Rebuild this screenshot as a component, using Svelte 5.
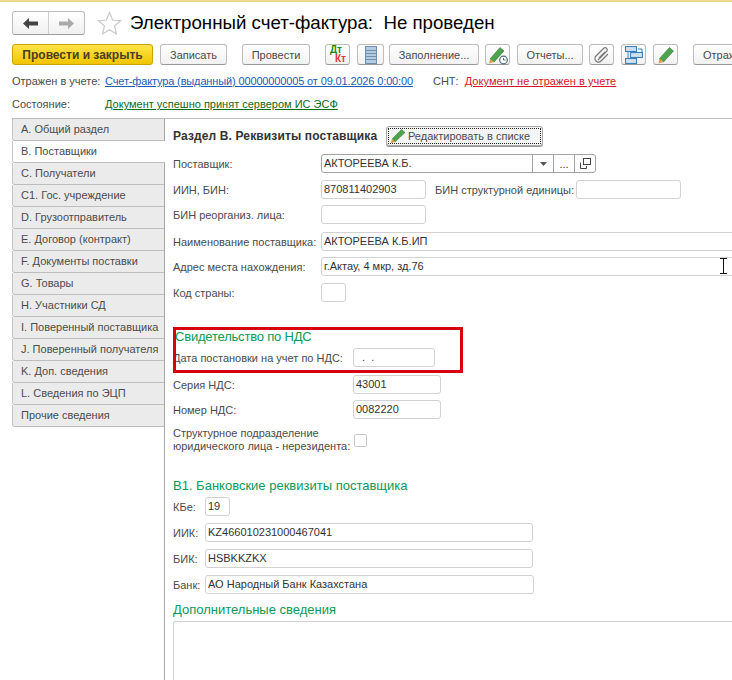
<script>
  const tabs = ['A. Общий раздел','B. Поставщики','C. Получатели','С1. Гос. учреждение','D. Грузоотправитель','E. Договор (контракт)','F. Документы поставки','G. Товары','H. Участники СД','I. Поверенный поставщика','J. Поверенный получателя','K. Доп. сведения','L. Сведения по ЭЦП','Прочие сведения'];
</script>

<div class="page">
  <header class="head">
    <div class="nav">
      <button class="navbtn"><svg width="15" height="11" viewBox="0 0 15 11"><path d="M0 5.5 6 0v3.5h9v4H6V11z" fill="#444"/></svg></button>
      <button class="navbtn"><svg width="15" height="11" viewBox="0 0 15 11"><path d="M15 5.5 9 0v3.5H0v4h9V11z" fill="#aaa"/></svg></button>
    </div>
    <svg class="star" width="25" height="24" viewBox="0 0 25 24"><path d="M12.5 1.5 15.6 9l8 .7-6.1 5.3 1.9 7.9-6.9-4.2-6.9 4.2 1.9-7.9L1.4 9.700l8-.7z" fill="#fff" stroke="#c8c8c8" stroke-width="1.200"/></svg>
    <h1>Электронный счет-фактура:&nbsp; Не проведен</h1>
  </header>

  <div class="toolbar">
    <button class="btn primary w141">Провести и закрыть</button>
    <button class="btn w67 ml7">Записать</button>
    <button class="btn w68 ml15">Провести</button>
    <button class="btn icon ml15 dtkt"><span class="dt">Дт</span><span class="kt">Кт</span></button>
    <button class="btn iconw ml7"><svg width="12" height="18" viewBox="0 0 12 18"><rect x=".5" y=".5" width="11" height="17" fill="#b5cbe0" stroke="#6f8fae"/><path d="M1 4.500h10M1 7.500h10M1 10.500h10M1 13.500h10" stroke="#6f8fae"/></svg></button>
    <button class="btn w90 ml5">Заполнение...</button>
    <button class="btn icon ml6"><svg width="20" height="20" viewBox="0 0 20 20"><path d="M2 14 12 2.500l4 3.500L6 17z" fill="#4ea24e" stroke="#3a7a3a" stroke-width=".6"/><path d="M2 14l-1 4.500L6 17z" fill="#e0a04a"/><circle cx="15.500" cy="15" r="3.800" fill="#fff" stroke="#4a6a80" stroke-width="1.200"/><path d="M15.500 13v2h2" stroke="#4a6a80" fill="none"/></svg></button>
    <button class="btn w66 ml7">Отчеты...</button>
    <button class="btn icon ml6"><svg width="18" height="18" viewBox="0 0 18 18"><path d="M5 14 14 5a2.200 2.200 0 0 0-3-3L3 10a3.500 3.500 0 0 0 5 5l7-7M6 12l6-6" fill="none" stroke="#777" stroke-width="1.200"/></svg></button>
    <button class="btn icon ml7"><svg width="18" height="18" viewBox="0 0 18 18"><g fill="#cfe0f0" stroke="#3f7fb5" stroke-width="1.100"><rect x=".5" y=".5" width="11" height="5"/><rect x="5.500" y="6.500" width="12" height="5"/><rect x=".5" y="12.500" width="11" height="5"/></g><path d="M13 3h4v3M3 6v6" fill="none" stroke="#3f7fb5"/></svg></button>
    <button class="btn icon ml7"><svg width="18" height="18" viewBox="0 0 18 18"><path d="M2.500 12.500 12.500 1.500l4 3.500L6.500 16z" fill="#4ea24e" stroke="#3a7a3a" stroke-width=".6"/><path d="M2.500 12.500 1.500 17.500l5-1.500z" fill="#e0a04a"/></svg></button>
    <button class="btn clip ml15">Отражение</button>
  </div>

  <div class="info first">
    <span class="k">Отражен в учете:</span>
    <a class="blue" href="#a">Счет-фактура (выданный) 00000000005 от 09.01.2026 0:00:00</a>
    <span class="snt">СНТ:</span>
    <a class="red" href="#b">Документ не отражен в учете</a>
  </div>
  <div class="info second">
    <span class="k">Состояние:</span>
    <a class="green" href="#c">Документ успешно принят сервером ИС ЭСФ</a>
  </div>

  <main class="main">
    <nav class="tabs">
      {#each tabs as t, i}
        <div class="tab" class:active={i === 1}>{t}</div>
      {/each}
    </nav>

    <section class="form">
      <div class="section-head">
        <strong>Раздел В. Реквизиты поставщика</strong>
        <button class="edit"><svg width="16" height="16" viewBox="0 0 16 16"><path d="M2 11 11.500 1.500l3.500 3L5 14z" fill="#4ea24e" stroke="#3a7a3a" stroke-width=".5"/><path d="M2 11 .8 15.200 5 14z" fill="#e0a04a"/></svg>Редактировать в списке</button>
      </div>

      <div class="row r1">
        <label class="l148">Поставщик:</label>
        <div class="combo">
          <span class="cval">АКТОРЕЕВА К.Б.</span>
          <span class="cb"><svg width="7" height="4" viewBox="0 0 7 4"><path d="M0 0h7L3.500 4z" fill="#555"/></svg></span>
          <span class="cb dots">...</span>
          <span class="cb"><svg width="11" height="11" viewBox="0 0 11 11" fill="none" stroke="#444"><rect x="3.500" y=".5" width="7" height="6"/><path d="M.5 4.500v6h6V8"/></svg></span>
        </div>
      </div>
      <div class="row r2">
        <label class="l148">ИИН, БИН:</label>
        <div class="inp w105">870811402903</div>
        <label class="mid">БИН структурной единицы:</label>
        <div class="inp w105"></div>
      </div>
      <div class="row r3">
        <label class="l148">БИН реорганиз. лица:</label>
        <div class="inp w105"></div>
      </div>
      <div class="row r4">
        <label class="l148">Наименование поставщика:</label>
        <div class="inp open">АКТОРЕЕВА К.Б.ИП</div>
      </div>
      <div class="row r5">
        <label class="l148">Адрес места нахождения:</label>
        <div class="inp open">г.Актау, 4 мкр, зд.76</div>
      </div>
      <div class="row r6">
        <label class="l148">Код страны:</label>
        <div class="inp w25"></div>
      </div>

      <h2 class="green-h vat">Свидетельство по НДС</h2>
      <div class="row r7">
        <label class="l180">Дата постановки на учет по НДС:</label>
        <div class="inp w82 date">&nbsp;.&nbsp;&nbsp;.</div>
      </div>
      <div class="row r8">
        <label class="l180">Серия НДС:</label>
        <div class="inp w88">43001</div>
      </div>
      <div class="row r9">
        <label class="l180">Номер НДС:</label>
        <div class="inp w88">0082220</div>
      </div>
      <div class="row r10">
        <label class="l181 two">Структурное подразделение<br />юридического лица - нерезидента:</label>
        <span class="check"></span>
      </div>

      <h2 class="green-h bank">В1. Банковские реквизиты поставщика</h2>
      <div class="row r11">
        <label class="l32">КБе:</label>
        <div class="inp w25">19</div>
      </div>
      <div class="row r12">
        <label class="l32">ИИК:</label>
        <div class="inp w328">KZ466010231000467041</div>
      </div>
      <div class="row r12">
        <label class="l32">БИК:</label>
        <div class="inp w328">HSBKKZKX</div>
      </div>
      <div class="row r12">
        <label class="l32">Банк:</label>
        <div class="inp w329">АО Народный Банк Казахстана</div>
      </div>
      <h2 class="green-h extra">Дополнительные сведения</h2>
      <div class="area"></div>
    </section>
  </main>

  <div class="redbox"></div>
  <svg class="cursor" width="9" height="16" viewBox="0 0 9 16"><path d="M1 .5h7M1 15.500h7M4.500 .5v15" stroke="#111" fill="none"/></svg>
</div>

<style>
  :global(body) { margin: 0; background: #fff; }
  .page {
    position: relative;
    width: 732px;
    height: 680px;
    overflow: hidden;
    background: #fff;
    border-top: 2px solid #ecd98f;
    box-sizing: border-box;
    font: 11px/14px "Liberation Sans", Arial, sans-serif;
    color: #4b4b4b;
  }
  .head { display: flex; align-items: center; height: 26px; padding: 8px 0 0 12px; }
  .nav {
    display: flex; width: 73px; height: 24px; box-sizing: border-box;
    border: 1px solid #bdbdbd; border-bottom-color: #9c9c9c; border-radius: 3px;
    background: linear-gradient(#fff, #f0f0f0);
  }
  .navbtn { flex: 1; padding: 0; border: 0; background: none; display: flex; align-items: center; justify-content: center; }
  .navbtn + .navbtn { border-left: 1px solid #cfcfcf; }
  .star { margin-left: 12px; }
  h1 { margin: 0 0 0 8px; font-size: 18.7px; font-weight: 400; color: #000; line-height: 24px; white-space: nowrap; }

  .toolbar { display: flex; height: 21px; margin-top: 8px; padding-left: 12px; white-space: nowrap; }
  .btn {
    height: 21px; box-sizing: border-box; padding: 0; flex: none;
    border: 1px solid #bdbdbd; border-bottom-color: #999; border-radius: 3px;
    background: linear-gradient(#fff, #f1f1f1);
    font: 11px "Liberation Sans", Arial, sans-serif; color: #4b4b4b;
    display: flex; align-items: center; justify-content: center;
  }
  .primary { background: linear-gradient(#ffe44a, #f2c400); border-color: #c7a400; font-weight: 700; font-size: 12px; color: #4a4020; }
  .w141 { width: 141px; } .w67 { width: 67px; } .w68 { width: 68px; } .w90 { width: 90px; } .w66 { width: 66px; }
  .icon { width: 25px; } .iconw { width: 27px; }
  .ml5 { margin-left: 5px; } .ml6 { margin-left: 6px; } .ml7 { margin-left: 7px; } .ml15 { margin-left: 15px; }
  .clip { width: 70px; justify-content: flex-start; padding-left: 9px; }
  .dtkt { position: relative; font-weight: 700; font-size: 10px; line-height: 8px; }
  .dt { position: absolute; left: 4px; top: 1px; color: #1b8a1b; }
  .kt { position: absolute; left: 9px; top: 10px; color: #e8333a; }

  .info { display: flex; white-space: nowrap; height: 14px; padding-left: 12px; }
  .info.first { margin-top: 9px; }
  .info.second { margin-top: 9px; }
  .k { width: 93px; flex: none; }
  a { text-decoration: underline; }
  .blue { color: #1c5bb8; letter-spacing: -0.14px; }
  .green { color: #0b6b1d; }
  .red { color: #d3142a; letter-spacing: 0.07px; }
  .snt { margin-left: 20px; margin-right: 6px; }

  .main { display: flex; margin-top: 7px; margin-left: 12px; border-top: 1px solid #bdbdbd; }
  .tabs { width: 152px; flex: none; }
  .tab {
    height: 22px; box-sizing: border-box; padding: 3px 0 0 8px; white-space: nowrap;
    background: #ebebeb; border-left: 1px solid #c6c6c6; border-bottom: 1px solid #bdbdbd;
    border-radius: 0 0 0 3px;
  }
  .tab.active { background: #fff; margin-right: 0; position: relative; width: 153px; z-index: 1; }
  .form { flex: 1; min-width: 0; height: 561px; border-left: 1px solid #a9a9a9; padding-left: 8px; }

  .section-head { display: flex; align-items: center; height: 20px; margin-top: 7px; white-space: nowrap; }
  .section-head strong { color: #333; width: 213px; flex: none; font-size: 12px; letter-spacing: 0.13px; }
  .edit {
    width: 157px; height: 20px; padding: 0 0 0 3px; box-sizing: border-box; display: flex; align-items: center; gap: 2px;
    border: 1px solid #a8a8a8; border-radius: 3px; background: #f4f4f4;
    outline: 1px dotted #222; outline-offset: -3px;
    box-shadow: 0 1px 0 #999;
    font: 11px "Liberation Sans", Arial, sans-serif; color: #4b4b4b; white-space: nowrap;
  }
  .row { display: flex; align-items: center; height: 19px; white-space: nowrap; }
  .r1 { margin-top: 8px; } .r2 { margin-top: 7px; } .r3 { margin-top: 6px; }
  .r4 { margin-top: 8px; } .r5 { margin-top: 6px; } .r6 { margin-top: 7px; }
  .l148 { width: 148px; flex: none; }
  .l180 { width: 180px; flex: none; }
  .l181 { width: 181px; flex: none; }
  .l32 { width: 32px; flex: none; }
  .mid { margin-left: 9px; width: 141px; flex: none; }
  .inp {
    height: 19px; box-sizing: border-box; padding: 0 0 0 2px; flex: none;
    border: 1px solid #d2d2d2; border-radius: 3px; line-height: 17px; color: #333; background: #fff;
  }
  .w105 { width: 105px; } .w25 { width: 25px; } .w82 { width: 82px; } .w88 { width: 88px; } .w328 { width: 328px; } .w329 { width: 329px; }
  .open { width: 450px; border-radius: 3px 0 0 3px; }
  .date { padding-left: 5px; }
  .combo {
    display: flex; width: 275px; height: 19px; box-sizing: border-box; flex: none;
    border: 1px solid #a3a3a3; border-radius: 3px; line-height: 17px; color: #333;
  }
  .cval { flex: 1; padding-left: 2px; }
  .cb { width: 20px; border-left: 1px solid #a3a3a3; display: flex; align-items: center; justify-content: center; }
  .dots { align-items: flex-end; line-height: 14px; padding-bottom: 1px; box-sizing: content-box; }

  .green-h { margin: 0; font-size: 13px; font-weight: 400; line-height: 15px; color: #0a9a5a; white-space: nowrap; }
  .vat { margin-top: 27px; padding-left: 2px; letter-spacing: -0.2px; }
  .r7 { margin-top: 4px; } .r8 { margin-top: 8px; } .r9 { margin-top: 6px; }
  .r10 { margin-top: 7px; height: 28px; }
  .two { line-height: 13px; }
  .check { width: 13px; height: 13px; box-sizing: border-box; border: 1px solid #c8c8c8; border-radius: 2px; }
  .bank { margin-top: 24px; }
  .r11 { margin-top: 4px; }
  .r12 { margin-top: 7px; }
  .extra { margin-top: 8px; }
  .area { height: 70px; margin-top: 4px; border: 1px solid #d2d2d2; border-right: 0; border-bottom: 0; border-radius: 3px 0 0 0; }

  .redbox { position: absolute; left: 173px; top: 325px; width: 290px; height: 46px; box-sizing: border-box; border: 3px solid #d7000f; pointer-events: none; }
  .cursor { position: absolute; left: 719px; top: 256px; }
</style>
